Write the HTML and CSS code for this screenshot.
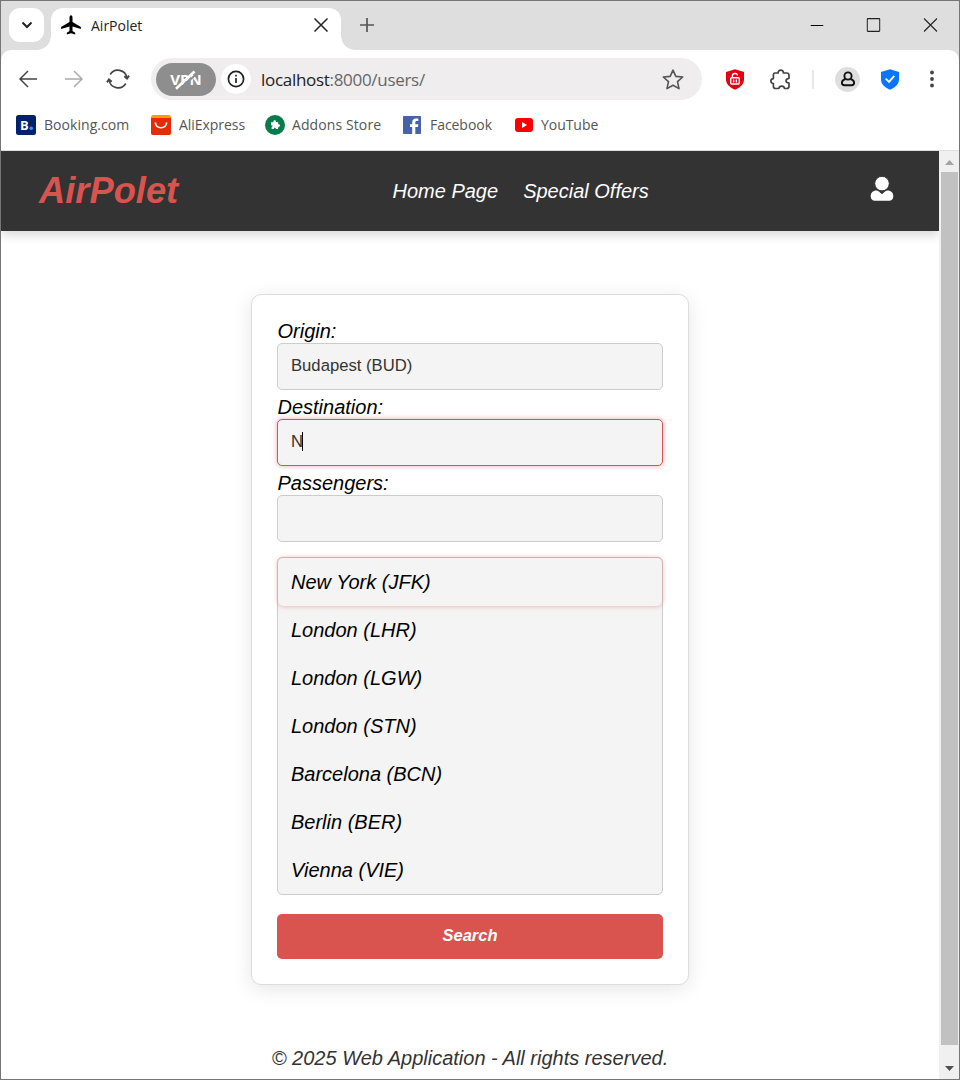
FILE: index.html
```html
<!DOCTYPE html>
<html lang="en">
<head>
<meta charset="utf-8">
<title>AirPolet</title>
<link rel="stylesheet" href="styles.css">
</head>
<body>
<div class="window">
  <div class="tabstrip">
    <div class="tab-menu"><svg width="12" height="8" viewBox="0 0 12 8" fill="none" stroke="#222" stroke-width="2"><path d="M1.500 1.500 6 6l4.500-4.500"/></svg></div>
    <div class="tab">
      <svg width="20" height="20" viewBox="0 0 20 20"><path d="M10 .2c-1 0-1.500 1.200-1.500 2.500V7L.1 12v2.100l8.400-2.500v4.300l-2.700 1.900v1.600L10 18.200l4.200 1.200v-1.600l-2.700-1.900v-4.300l8.400 2.500V12l-8.400-5V2.700C11.500 1.400 11 .2 10 .2z"/></svg>
      <span class="tab-title">AirPolet</span>
      <svg class="tab-close" width="14" height="14" viewBox="0 0 14 14" stroke="#222" stroke-width="1.500"><path d="M.5.500l13 13M13.500.500l-13 13"/></svg>
    </div>
    <svg class="new-tab" width="14" height="14" viewBox="0 0 14 14" stroke="#555" stroke-width="1.700"><path d="M7 0v14M0 7h14"/></svg>
    <div class="controls">
      <svg width="13" height="14" viewBox="0 0 13 14" stroke="#000"><path d="M0 7.500h13"/></svg>
      <svg width="14" height="14" viewBox="0 0 14 14" fill="none" stroke="#222" stroke-width="1.200"><rect x=".7" y=".7" width="12.600" height="12.600" rx=".8"/></svg>
      <svg width="14" height="14" viewBox="0 0 14 14" stroke="#222" stroke-width="1.100"><path d="M.5.500l13 13M13.500.500l-13 13"/></svg>
    </div>
  </div>
  <div class="toolbar">
    <svg class="back" width="18" height="18" viewBox="0 0 18 18" fill="none" stroke="#444" stroke-width="1.500"><path d="M18 9H1M9 1 1 9l8 8"/></svg>
    <svg class="forward" width="18" height="18" viewBox="0 0 18 18" fill="none" stroke="#aaa" stroke-width="1.500"><path d="M0 9h17M9 1l8 8-8 8"/></svg>
    <svg class="reload" width="24" height="22" viewBox="0 0 24 22" fill="none" stroke="#444" stroke-width="1.600"><path d="M4.200 6.500A9 9 0 0 1 20.800 10M19.800 15.500A9 9 0 0 1 3.200 12"/><path d="m18.300 8.300 2.700 2.200 2-2.900M1 14.400l2-2.900 2.700 2.200" stroke-width="2"/></svg>
    <div class="address">
      <div class="vpn"><span>VPN</span><svg class="vpn-slash" width="26" height="22" viewBox="0 0 26 22"><path d="M5.500 21 24 4.500" stroke="#8e8e8e" stroke-width="2"/><path d="M3 19.800 21.500 2.500" stroke="#fff" stroke-width="2.600"/></svg></div>
      <div class="info"><svg width="18" height="18" viewBox="0 0 18 18" fill="none" stroke="#222" stroke-width="1.700"><circle cx="9" cy="9" r="7.600"/><path d="M9 8v5M9 4.800v1.700"/></svg></div>
      <div class="url"><span class="host">localhost</span>:8000/users/</div>
      <svg class="star" width="22" height="21" viewBox="0 0 22 21" fill="none" stroke="#555" stroke-width="1.600" stroke-linejoin="round"><path d="m11 1.200 2.800 6.200 6.900.6-5.200 4.700 1.500 6.900-6-3.300-6 3.300 1.500-6.900L1.300 8l6.900-.6z"/></svg>
    </div>
    <svg class="adblock" width="20" height="21" viewBox="0 0 20 21"><path d="M10 .3 19 3v7.500c0 5.400-5.200 8.500-9 10.200C6.200 19 1 15.900 1 10.500V3z" fill="#e30010"/><g fill="none" stroke="#fff" stroke-width="1.400"><rect x="5.700" y="8.800" width="8.600" height="6.200" rx="1"/><path d="M7.400 9V6.700c0-2.700 4.700-3 5.100-.4M8.600 10.500v3M11.400 10.500v3"/></g></svg>
    <svg class="puzzle" width="21" height="21" viewBox="0 0 21 21" fill="none" stroke="#444" stroke-width="1.700" stroke-linejoin="round"><path d="M5 4h3.200c-.6-3.900 5.700-3.900 5.200 0h3.300c1.500 0 2.300.8 2.300 2.300v3c-4 .5-4 4.300 0 4.700v3.200c0 1.500-.8 2.300-2.300 2.300h-2.200c-.4-3.300-5.200-3.300-5.600 0H5.500c-1.500 0-2.100-.8-2.100-2.300v-2.600c-3.400-.5-3.400-4.600 0-5V6.300C3.400 4.800 4 4 5 4z"/></svg>
    <span class="divider"></span>
    <div class="avatar"><svg width="14" height="16" viewBox="0 0 14 16" fill="none" stroke="#111" stroke-width="1.900"><circle cx="7" cy="5" r="3.600"/><path d="M4.500 8C-.2 9.400 0 14.300 3.500 14.300h7c3.500 0 3.700-4.900-1-6.300"/></svg></div>
    <svg class="shield" width="18" height="21" viewBox="0 0 18 21"><path d="M9 .3 18 3v7.500c0 5.400-5.200 8.500-9 10.200-3.800-1.700-9-4.800-9-10.200V3z" fill="#0a75ff"/><path d="m4.700 9.700 3.300 3.200 5.300-6" fill="none" stroke="#fff" stroke-width="1.800"/></svg>
    <svg class="more" width="4" height="18" viewBox="0 0 4 18" fill="#444"><circle cx="2" cy="2.500" r="1.900"/><circle cx="2" cy="9" r="1.900"/><circle cx="2" cy="15.500" r="1.900"/></svg>
  </div>
  <div class="bookmarks">
    <div class="bookmark booking"><svg width="20" height="20" viewBox="0 0 20 20"><rect width="20" height="20" rx="2.500" fill="#00226c"/><text x="4" y="14.800" class="booking-text">B</text><circle cx="15.200" cy="13.300" r="1.800" fill="#2a9bf5"/></svg><span>Booking.com</span></div>
    <div class="bookmark ali"><svg width="20" height="20" viewBox="0 0 20 20"><rect width="20" height="20" rx="2.500" fill="#ff9a00"/><path d="M0 3h20v14.500a2.500 2.500 0 0 1-2.500 2.500h-15A2.500 2.500 0 0 1 0 17.500z" fill="#e62c04"/><path d="M4.300 7.500c1 7 10.400 7 11.400 0" fill="none" stroke="#fff" stroke-width="1.700"/></svg><span>AliExpress</span></div>
    <div class="bookmark addons"><svg width="20" height="20" viewBox="0 0 20 20"><circle cx="10" cy="10" r="10" fill="#087c4b"/><path d="M6 7.200h2.500c-.8-2.400 2.900-2.500 2.500-.2l2.200.2v2c2.200-.6 2.400 2.700.2 2.500l-.4 2.400h-2c-.4-1.700-2-1.600-2.200 0H6.600V12c1.500-.5 1.200-2.100-.6-1.800z" fill="#fff"/></svg><span>Addons Store</span></div>
    <div class="bookmark fb"><svg width="18" height="18" viewBox="0 0 18 18"><rect width="18" height="18" rx=".8" fill="#4862a8"/><path d="M9.200 18v-7H7V8.200h2.200V6.100c0-2.600 1.500-3.700 4-3.700h2.100v2.700h-1.500c-1.200 0-1.500.5-1.500 1.500v1.600h3L15 11h-2.700v7z" fill="#fff"/></svg><span>Facebook</span></div>
    <div class="bookmark yt"><svg width="18" height="14" viewBox="0 0 18 14"><rect width="18" height="14" rx="3" fill="#f00"/><path d="m7 4 5 3-5 3z" fill="#fff"/></svg><span>YouTube</span></div>
  </div>
  <div class="viewport">
    <div class="page">
      <header class="navbar">
        <div class="logo">AirPolet</div>
        <nav class="links"><a>Home Page</a><a>Special Offers</a></nav>
        <svg class="user" width="24" height="26" viewBox="0 0 24 26" fill="#fff"><path d="M6.400 14.600c1.600 0 2.400 1 5.600 3.700 3.200-2.700 4-3.700 5.600-3.700 3.500 0 5.700 2.300 5.700 5.600 0 2.900-1.700 4.500-4.300 4.500H5c-2.600 0-4.300-1.600-4.300-4.500 0-3.300 2.200-5.600 5.700-5.600z"/><circle cx="12" cy="7.600" r="7.300" stroke="#333"/></svg>
      </header>
      <main class="main">
        <form class="card">
          <label class="label">Origin:</label>
          <div class="field">Budapest (BUD)</div>
          <label class="label">Destination:</label>
          <div class="field focused">N<span class="caret"></span></div>
          <label class="label">Passengers:</label>
          <div class="field"></div>
          <ul class="options">
            <li class="active">New York (JFK)</li>
            <li>London (LHR)</li>
            <li>London (LGW)</li>
            <li>London (STN)</li>
            <li>Barcelona (BCN)</li>
            <li>Berlin (BER)</li>
            <li>Vienna (VIE)</li>
          </ul>
          <div class="submit">Search</div>
        </form>
      </main>
      <footer class="footer">© 2025 Web Application - All rights reserved.</footer>
    </div>
    <div class="scrollbar">
      <svg width="9" height="5" viewBox="0 0 9 5"><path d="M0 5 4.500 0 9 5z" fill="#a3a3a3"/></svg>
      <div class="thumb"></div>
      <svg width="9" height="5" viewBox="0 0 9 5"><path d="M0 0h9L4.500 5z" fill="#505050"/></svg>
    </div>
  </div>
</div>
</body>
</html>
```
FILE: styles.css
```css
* { box-sizing: border-box; }
body { margin: 0; font-family: "Open Sans", "Noto Sans", sans-serif; }
svg { display: block; flex: none; }
.window { width: 960px; height: 1080px; border: 1px solid #767676; background: #dedede; display: flex; flex-direction: column; overflow: hidden; }

.tabstrip { height: 49px; display: flex; align-items: flex-start; padding: 7px 0 0 8px; flex: none; }
.tab-menu { width: 35px; height: 34px; border-radius: 11px; background: #fff; display: flex; align-items: center; justify-content: center; }
.tab { position: relative; width: 290px; height: 42px; margin-left: 7px; padding: 0 13px 8px 10px; border-radius: 12px 12px 0 0; background: #fff; display: flex; align-items: center; }
.tab::before, .tab::after { content: ""; position: absolute; bottom: 0; width: 14px; height: 14px; }
.tab::before { left: -14px; background: radial-gradient(circle at 0 0, transparent 13.500px, #fff 14px); }
.tab::after { right: -14px; background: radial-gradient(circle at 100% 0, transparent 13.500px, #fff 14px); }
.tab-title { margin-left: 10px; font-size: 14px; letter-spacing: 0; color: #222; }
.tab-close { margin-left: auto; }
.new-tab { margin: 10px 0 0 19px; }
.controls { margin: 10px 21px 0 auto; display: flex; gap: 43px; transform: translateX(-0.5px); }

.toolbar { height: 58px; flex: none; background: #fff; border-radius: 10px 10px 0 0; display: flex; align-items: center; }
.back { margin-left: 18px; }
.forward { margin-left: 28px; }
.reload { margin-left: 23px; }
.address { width: 551px; height: 42px; margin-left: 21px; padding: 0 18px 0 5px; border-radius: 21px; background: #efedee; display: flex; align-items: center; }
.vpn { position: relative; width: 60px; height: 33px; border-radius: 17px; background: #8e8e8e; color: #fff; font-size: 15px; font-weight: bold; line-height: 22px; display: flex; align-items: center; justify-content: center; }
.vpn-slash { position: absolute; left: 17px; top: 6px; }
.info { width: 30px; height: 30px; margin-left: 5px; border-radius: 50%; background: #fff; display: flex; align-items: center; justify-content: center; }
.url { margin-left: 10px; font-size: 17px; letter-spacing: -0.3px; color: #666; }
.host { color: #222; }
.star { margin-left: auto; }
.adblock { margin-left: 23px; }
.puzzle { margin-left: 25px; }
.divider { width: 2px; height: 19px; margin-left: 21px; background: #e8e8e8; }
.avatar { width: 25px; height: 25px; margin-left: 21px; border-radius: 50%; background: #dedede; display: flex; align-items: center; justify-content: center; }
.shield { margin-left: 21px; }
.more { margin-left: 31px; }

.bookmarks { height: 43px; flex: none; padding: 0 0 8px 15px; background: #fff; border-bottom: 1px solid #dce0dc; display: flex; align-items: center; }
.bookmark { display: flex; align-items: center; gap: 8px; font-size: 14px; letter-spacing: -0.05px; line-height: 20px; color: #555; white-space: nowrap; }
.booking { width: 135px; letter-spacing: 0.05px; }
.ali { width: 114px; }
.addons { width: 138px; gap: 7px; letter-spacing: 0.1px; }
.fb { width: 112px; gap: 9px; }
.yt { gap: 8px; }
.booking-text { font: bold 13px "Open Sans", sans-serif; fill: #fff; }

.viewport { flex: 1; display: flex; background: #fff; min-height: 0; }
.page { width: 938px; font-family: "Liberation Sans", Arial, sans-serif; font-style: italic; font-size: 20px; line-height: 23px; color: #000; display: flex; flex-direction: column; overflow: hidden; }
.navbar { height: 80px; flex: none; background: #333; padding: 0 45px 0 38px; box-shadow: 0 4px 10px rgba(0,0,0,.16); display: flex; align-items: center; justify-content: space-between; }
.logo { width: 140px; font-size: 36.300px; line-height: 40px; font-weight: bold; color: #d9534f; }
.links { display: flex; gap: 25px; width: 258px; margin-left: 189.500px; margin-right: auto; color: #fff; padding-left: 24px; white-space: nowrap; }
.user { margin-top: -5px; }
.main { padding-top: 63px; display: flex; justify-content: center; }
.card { width: 438px; height: 691px; padding: 25px; border: 1px solid #ddd; border-radius: 10px; background: #fff; box-shadow: 0 4px 20px rgba(0,0,0,.1); }
.label { display: block; padding-left: 0.5px; }
.field { height: 47px; margin-bottom: 6px; padding: 0 13px 3px; border: 1px solid #ccc; border-radius: 5px; background: #f4f4f4; color: #333; font-size: 16.670px; font-style: normal; display: flex; align-items: center; }
.focused { border-color: #d9534f; box-shadow: 0 0 5px rgba(217,83,79,.5); }
.caret { width: 1px; height: 19px; background: #000; margin-left: -1px; }
.options { list-style: none; margin: 15px 0 19px; padding: 0; border: 1px solid #ccc; border-radius: 5px; background: #f4f4f4; }
.options li { height: 48px; padding: 12px 13px; line-height: 24px; }
.options .active { border-radius: 5px; box-shadow: 0 0 5px rgba(217,83,79,.5); }
.submit { height: 45px; padding-bottom: 3px; border-radius: 5px; background: #d9534f; color: #fff; font-size: 16.500px; font-weight: bold; display: flex; align-items: center; justify-content: center; }
.footer { margin-top: 62px; text-align: center; color: #333; }

.scrollbar { width: 20px; background: #f0f0f0; display: flex; flex-direction: column; align-items: center; padding: 9px 0 8px; }
.thumb { width: 17px; height: 873px; margin: 7px 0 21px; background: #c1c1c1; flex: none; }
```
